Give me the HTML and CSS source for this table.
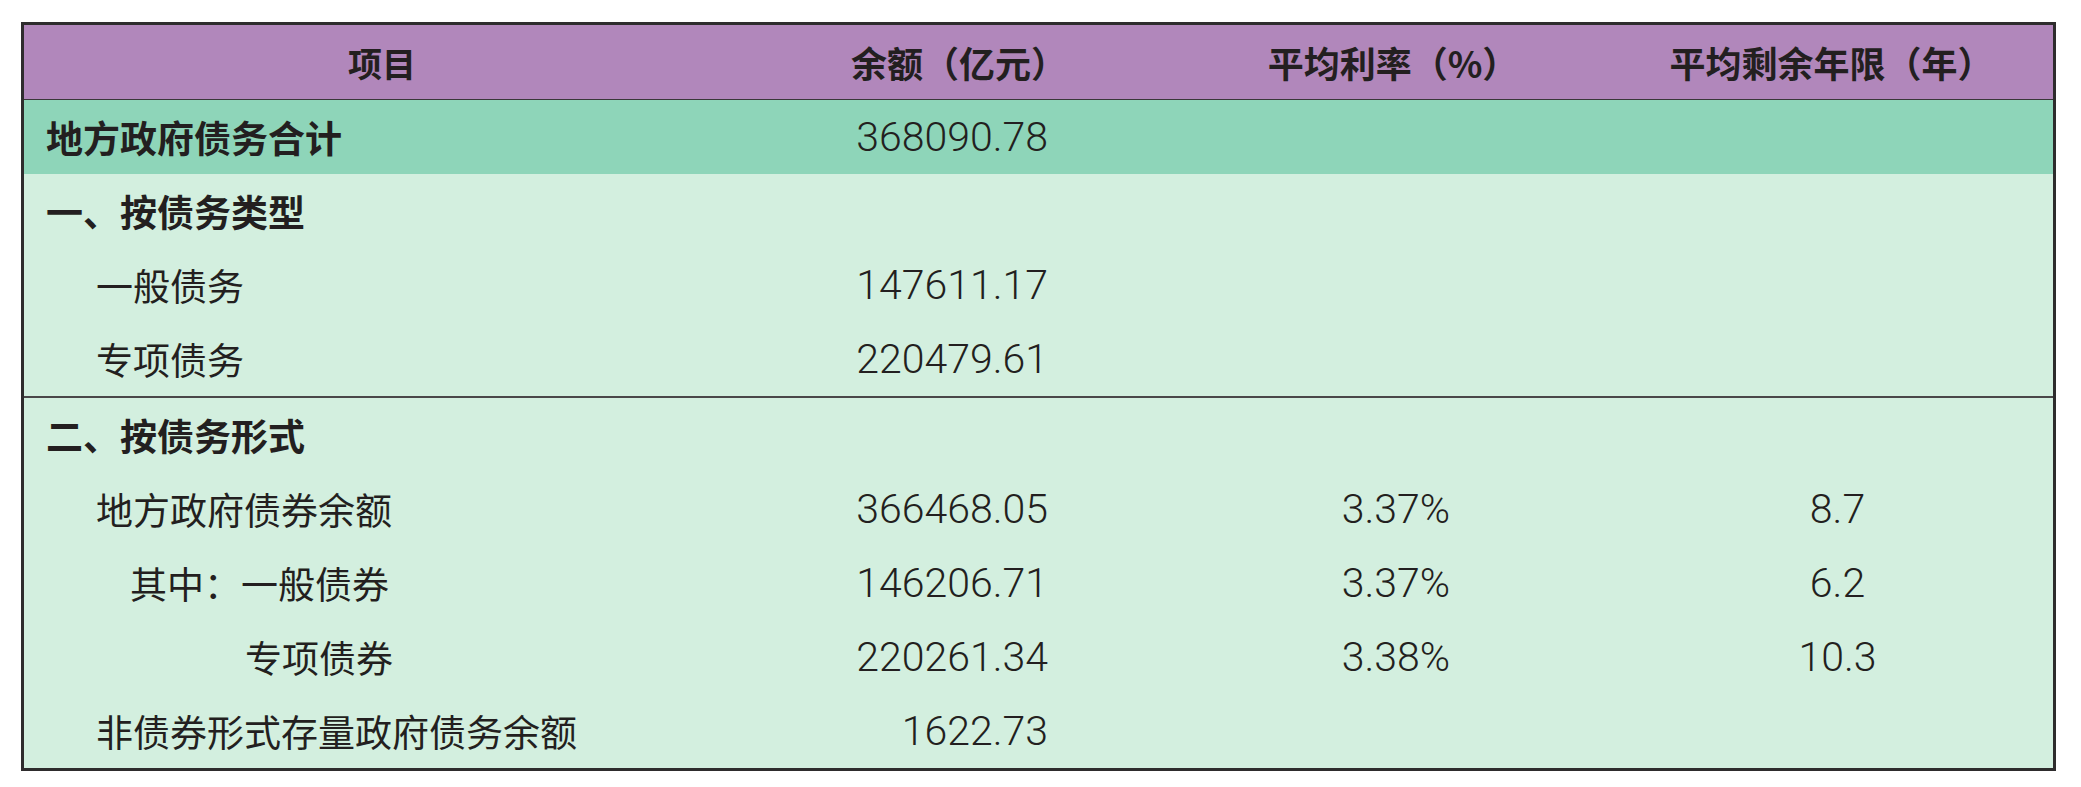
FILE: index.html
```html
<!DOCTYPE html>
<html lang="zh-CN">
<head>
<meta charset="utf-8">
<title>地方政府债务</title>
<link rel="stylesheet" href="styles.css">
</head>
<body>
<div class="frame">
<table class="debt">
  <colgroup>
    <col class="c1"><col class="c2"><col class="c3"><col class="c4">
  </colgroup>
  <thead>
    <tr class="head">
      <th class="h1">项目</th>
      <th>余额（亿元）</th>
      <th class="h3">平均利率（%）</th>
      <th class="h4">平均剩余年限（年）</th>
    </tr>
  </thead>
  <tbody>
    <tr class="total">
      <td class="name lv0 b">地方政府债务合计</td>
      <td class="amt">368090.78</td>
      <td class="rate"></td>
      <td class="yrs"></td>
    </tr>
    <tr>
      <td class="name lv0 b">一、按债务类型</td>
      <td class="amt"></td><td class="rate"></td><td class="yrs"></td>
    </tr>
    <tr>
      <td class="name lv1">一般债务</td>
      <td class="amt">147611.17</td><td class="rate"></td><td class="yrs"></td>
    </tr>
    <tr class="last-of-group">
      <td class="name lv1">专项债务</td>
      <td class="amt">220479.61</td><td class="rate"></td><td class="yrs"></td>
    </tr>
    <tr>
      <td class="name lv0 b">二、按债务形式</td>
      <td class="amt"></td><td class="rate"></td><td class="yrs"></td>
    </tr>
    <tr>
      <td class="name lv1">地方政府债券余额</td>
      <td class="amt">366468.05</td><td class="rate">3.37%</td><td class="yrs">8.7</td>
    </tr>
    <tr>
      <td class="name lv2">其中：一般债券</td>
      <td class="amt">146206.71</td><td class="rate">3.37%</td><td class="yrs">6.2</td>
    </tr>
    <tr>
      <td class="name lv3">专项债券</td>
      <td class="amt">220261.34</td><td class="rate">3.38%</td><td class="yrs">10.3</td>
    </tr>
    <tr>
      <td class="name lv1">非债券形式存量政府债务余额</td>
      <td class="amt">1622.73</td><td class="rate"></td><td class="yrs"></td>
    </tr>
  </tbody>
</table>
</div>
</body>
</html>
```

FILE: styles.css
```css
html, body {
  margin: 0;
  padding: 0;
  background: #ffffff;
}

body {
  padding: 22px 0 0 21px;
  font-family: "Noto Sans CJK SC", "Liberation Sans", sans-serif;
  color: #231f20;
}

.frame {
  width: 2029px;
  border: 3px solid #2e2c2d;
  background: #d3efdf;
}

.debt {
  width: 2029px;
  border-collapse: collapse;
  table-layout: fixed;
}

.c1 { width: 716px; }
.c2 { width: 438px; }
.c3 { width: 424px; }
.c4 { width: 451px; }

.debt th,
.debt td {
  padding: 0;
  height: 74px;
  vertical-align: middle;
  white-space: nowrap;
}

.head th {
  background: #b187bb;
  font-size: 36px;
  font-weight: 700;
  text-align: center;
  color: #231f20;
  border-bottom: 1px solid #3a3839;
}

.head .h1 { font-size: 34px; }
.head .h3 { padding-left: 6px; }
.head .h4 { padding-left: 8px; }

.total td {
  background: #8ed5b9;
}

.debt td {
  font-size: 37px;
  line-height: 1;
}

.name { text-align: left; }
.b { font-weight: 700; }
.lv0 { padding-left: 22px !important; }
.lv1 { padding-left: 72px !important; }
.lv2 { padding-left: 106px !important; }
.lv3 { padding-left: 221px !important; }

.amt,
.rate,
.yrs {
  font-family: "Roboto", "Liberation Sans", sans-serif;
  font-weight: 300;
  font-size: 41px !important;
}

.amt {
  text-align: right;
  padding-right: 130px !important;
}

.rate {
  text-align: center;
  padding-left: 12px !important;
}

.yrs {
  text-align: center;
  padding-left: 20px !important;
}

.last-of-group td {
  border-bottom: 2px solid #4a4849;
}
```
